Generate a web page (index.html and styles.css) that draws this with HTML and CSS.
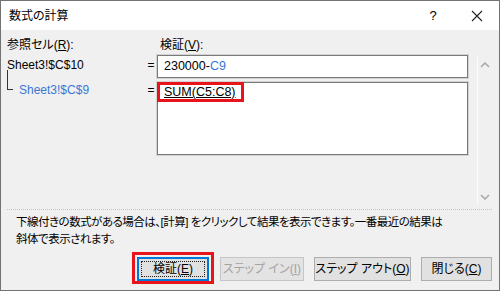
FILE: index.html
```html
<!DOCTYPE html>
<html lang="ja">
<head>
<meta charset="utf-8">
<title>数式の計算</title>
<link rel="stylesheet" href="styles.css">
</head>
<body>
<div class="window">
  <div class="titlebar">
    <span class="title">数式の計算</span>
    <span class="help">?</span>
    <span class="close"><svg width="12" height="12" viewBox="0 0 12 12"><path d="M1 1 L11 11 M11 1 L1 11" stroke="#222" stroke-width="1.1" fill="none"/></svg></span>
  </div>
  <div class="main">
    <div class="fields">
      <div class="lbl lbl-ref">参照セル(<u>R</u>):</div>
      <div class="lbl lbl-eval">検証(<u>V</u>):</div>
      <div class="ref ref1">Sheet3!$C$10</div>
      <div class="eq eq1">=</div>
      <div class="box box1">230000-<span class="blue">C9</span></div>
      <div class="ref ref2"><span class="tree"></span><span class="blue">Sheet3!$C$9</span></div>
      <div class="eq eq2">=</div>
      <div class="box box2"><span class="hl"><u>SUM(C5:C8)</u></span></div>
    </div>
    <div class="scroll">
      <svg class="chev" width="10" height="6" viewBox="0 0 10 6"><path d="M1 5 L5 1 L9 5" stroke="#a8a8a8" stroke-width="1.5" fill="none"/></svg>
      <svg class="chev" width="10" height="6" viewBox="0 0 10 6"><path d="M1 1 L5 5 L9 1" stroke="#a8a8a8" stroke-width="1.5" fill="none"/></svg>
    </div>
  </div>
  <div class="sep"></div>
  <p class="desc">下線付きの数式がある場合は、[計算] をクリックして結果を表示できます。一番最近の結果は<br>斜体で表示されます。</p>
  <div class="buttons">
    <div class="mark"><button class="btn btn-eval focus">検証(<u>E</u>)</button></div>
    <button class="btn btn-in" disabled>ステップ イン(<u>I</u>)</button>
    <button class="btn btn-out">ステップ アウト(<u>O</u>)</button>
    <button class="btn btn-close">閉じる(<u>C</u>)</button>
  </div>
</div>
</body>
</html>
```
FILE: styles.css
```css
html, body {
  margin: 0;
  padding: 0;
  background: #f0f0f0;
}
body {
  font-family: "Liberation Sans", "Noto Sans CJK JP", sans-serif;
  font-size: 12px;
  color: #000;
  font-feature-settings: "palt";
}
.window {
  width: 500px;
  height: 291px;
  box-sizing: border-box;
  border: 1px solid #737373;
  background: #f0f0f0;
  display: flex;
  flex-direction: column;
  overflow: hidden;
}
.titlebar {
  height: 29px;
  flex: none;
  background: #fff;
  display: flex;
  align-items: center;
  padding-left: 8px;
}
.title {
  font-size: 12px;
  line-height: 16px;
  flex: 1;
}
.help {
  font-size: 13px;
  width: 12px;
  text-align: center;
  margin-right: 32px;
}
.close {
  width: 12px;
  height: 12px;
  margin-right: 16px;
  display: flex;
}
.main {
  height: 179px;
  flex: none;
  box-sizing: border-box;
  padding: 8px 7px 0 6px;
  display: flex;
  align-items: flex-start;
}
.fields {
  display: grid;
  grid-template-columns: 137px 13px 311px;
  grid-template-rows: 17px 27px 73px;
  flex: none;
}
.lbl {
  line-height: 15px;
  white-space: nowrap;
}
.lbl-ref { grid-column: 1; grid-row: 1; }
.lbl-eval { grid-column: 3; grid-row: 1; padding-left: 3px; }
.ref {
  line-height: 20px;
  white-space: nowrap;
}
.ref1 { grid-column: 1; grid-row: 2; }
.eq {
  text-align: center;
  line-height: 20px;
  padding-left: 1px;
}
.eq1 { grid-column: 2; grid-row: 2; }
.eq2 {
  grid-column: 2;
  grid-row: 3;
  line-height: 16px;
}
.box {
  background: #fff;
  border: 1px solid #7a7a7a;
  box-sizing: border-box;
  box-shadow: 0 0 0 1px #d2d2d2;
}
.box1 {
  grid-column: 3;
  grid-row: 2;
  height: 23px;
  line-height: 20px;
  padding-left: 6px;
  font-size: 12.5px;
}
.box2 {
  grid-column: 3;
  grid-row: 3;
  height: 73px;
}
.blue {
  color: #3a78d6;
}
.ref2 {
  grid-column: 1;
  grid-row: 3;
  display: flex;
  align-items: flex-start;
  line-height: 16px;
}
.tree {
  flex: none;
  width: 5px;
  height: 19px;
  margin-top: -12px;
  border-left: 1px solid #333;
  border-bottom: 1px solid #333;
  margin-right: 6px;
}
.hl {
  display: inline-block;
  margin: -1px 0 0 -1px;
  box-sizing: border-box;
  height: 20px;
  border: 3px solid #e8141b;
  padding: 0 5px 0 4px;
  line-height: 14px;
  font-size: 12.5px;
}
.scroll {
  flex: none;
  width: 15px;
  height: 148px;
  box-sizing: border-box;
  margin: 19px 0 0 9px;
  border-left: 1px solid #fcfcfc;
  display: flex;
  flex-direction: column;
  justify-content: space-between;
  align-items: center;
  padding: 5px 0 5px 0;
}
.chev {
  display: block;
  flex: none;
}
.sep {
  margin: 0 7px 0 6px;
  border-top: 1px dotted #c4c4c4;
  flex: none;
}
.desc {
  margin: 0;
  padding: 4px 8px 0 15px;
  line-height: 17px;
  font-size: 11.5px;
  letter-spacing: -0.5px;
  white-space: nowrap;
}
.buttons {
  margin-top: 4px;
  display: flex;
  justify-content: flex-end;
  align-items: flex-start;
  padding-right: 7px;
}
.mark {
  border: 3px solid #e8141b;
  padding: 2px 2px 0 2px;
  display: flex;
}
.btn {
  font-family: "Liberation Sans", "Noto Sans CJK JP", sans-serif;
  font-feature-settings: "palt";
  font-size: 12px;
  height: 24px;
  box-sizing: border-box;
  background: #e1e1e1;
  border: 1px solid #adadad;
  color: #000;
  padding: 0;
  margin: 0;
  position: relative;
  line-height: 20px;
}
.btn-eval { width: 72px; }
.btn-in { width: 84px; margin: 5px 0 0 6px; color: #a3a3a3; border-color: #c6c6c6; background: #e3e3e3; }
.btn-out { width: 97px; margin: 5px 0 0 10px; }
.btn-close { width: 71px; margin: 5px 0 0 10px; }
.focus {
  border: 1px solid #0078d7;
  box-shadow: inset 0 0 0 1px #0078d7;
}
.focus::after {
  content: "";
  position: absolute;
  left: 3px;
  top: 3px;
  right: 3px;
  bottom: 3px;
  border: 1px dotted #222;
}
```
